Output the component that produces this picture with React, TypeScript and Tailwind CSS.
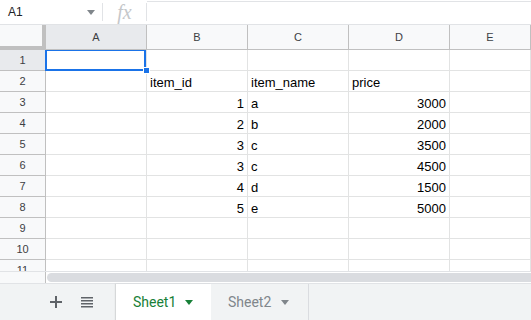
import * as React from 'react';

const COLS = ['A', 'B', 'C', 'D', 'E'];

type Cell = { v: string; num?: boolean };

const DATA: Record<number, Cell[]> = {
  2: [{ v: '' }, { v: 'item_id' }, { v: 'item_name' }, { v: 'price' }],
  3: [{ v: '' }, { v: '1', num: true }, { v: 'a' }, { v: '3000', num: true }],
  4: [{ v: '' }, { v: '2', num: true }, { v: 'b' }, { v: '2000', num: true }],
  5: [{ v: '' }, { v: '3', num: true }, { v: 'c' }, { v: '3500', num: true }],
  6: [{ v: '' }, { v: '3', num: true }, { v: 'c' }, { v: '4500', num: true }],
  7: [{ v: '' }, { v: '4', num: true }, { v: 'd' }, { v: '1500', num: true }],
  8: [{ v: '' }, { v: '5', num: true }, { v: 'e' }, { v: '5000', num: true }],
};

function Caret({ className }: { className: string }) {
  return (
    <svg width="8" height="5" viewBox="0 0 8 5" className={className}>
      <path d="M0 0h8L4 5z" fill="currentColor" />
    </svg>
  );
}

function FormulaBar() {
  return (
    <div className="flex h-[25px] items-stretch border-b border-[#e1e3e6] bg-white">
      <div className="flex w-[102px] items-center pl-[8px] pr-[7px]">
        <span className="flex-1 text-[12px] text-[#202124]">A1</span>
        <Caret className="text-[#80868b]" />
      </div>
      <div className="my-[3px] w-px bg-[#e1e3e6]" />
      <div className="flex w-[43px] items-center justify-center">
        <span className="font-['Liberation_Serif',serif] text-[20px] italic leading-none text-[#c5c7ca]">fx</span>
      </div>
      <div className="my-[3px] w-px bg-[#e1e3e6]" />
      <div className="mt-px flex-1 border-t border-[#e1e3e6]" />
    </div>
  );
}

function HeaderRow() {
  return (
    <div className="flex h-[25px]">
      <div className="w-[46px] shrink-0 border-b-4 border-r-4 border-[#c0c0c0] bg-[#f8f9fa]" />
      {COLS.map((c, i) => (
        <div
          key={c}
          className={`flex shrink-0 items-center justify-center border-b border-r border-[#c0c0c0] text-[11px] text-[#3c4043] ${
            i === 0 ? 'w-[101px] bg-[#e8eaed]' : i === 4 ? 'flex-1 bg-[#f8f9fa]' : 'w-[101px] bg-[#f8f9fa]'
          }`}
        >
          {c}
        </div>
      ))}
    </div>
  );
}

function Row({ n }: { n: number }) {
  const cells = DATA[n] ?? [];
  return (
    <div className="flex h-[21px] shrink-0">
      <div
        className={`flex w-[46px] shrink-0 items-center justify-center border-b border-r border-[#c0c0c0] text-[11px] text-[#3c4043] ${
          n === 1 ? 'bg-[#e8eaed]' : 'bg-[#f8f9fa]'
        }`}
      >
        {n}
      </div>
      {COLS.map((c, i) => {
        const cell = cells[i];
        const sel = n === 1 && i === 0;
        return (
          <div
            key={c}
            className={`relative flex shrink-0 items-end border-b border-r border-[#e2e3e3] px-[3px] pb-[1px] text-[13px] leading-[15px] text-black ${
              i === 4 ? 'flex-1' : 'w-[101px]'
            } ${cell?.num ? 'justify-end' : ''} ${sel ? 'z-10' : ''}`}
          >
            {cell?.v}
            {sel && (
              <>
                <div className="absolute left-[-1px] top-[-1px] h-[22px] w-[101px] border-2 border-[#1a73e8]" />
                <div className="absolute bottom-[-4px] right-[-4px] h-[7px] w-[7px] border border-white bg-[#1a73e8]" />
              </>
            )}
          </div>
        );
      })}
    </div>
  );
}

function Grid() {
  const rows = Array.from({ length: 11 }, (_, i) => i + 1);
  return (
    <div className="flex h-[221px] flex-col overflow-hidden">
      {rows.map((n) => (
        <Row key={n} n={n} />
      ))}
    </div>
  );
}

function Scrollbar() {
  return (
    <div className="flex h-[13px] border-y border-[#e1e3e6] bg-white">
      <div className="w-[46px] border-r border-[#c0c0c0] bg-[#f8f9fa]" />
      <div className="flex-1 py-px pl-px">
        <div className="h-full rounded-l-full bg-[#dadce0]" />
      </div>
    </div>
  );
}

function TabBar() {
  return (
    <div className="flex h-[36px] items-stretch bg-[#f1f3f4]">
      <div className="flex w-[116px] items-center pl-[50px]">
        <svg width="12" height="12" viewBox="0 0 12 12" className="text-[#5f6368]">
          <path d="M5 0h2v5h5v2H7v5H5V7H0V5h5z" fill="currentColor" />
        </svg>
        <svg width="12" height="12" viewBox="0 0 12 12" className="ml-[19px] text-[#5f6368]">
          <path d="M0 1h12v1.5H0zM0 4h12v1.5H0zM0 7h12v1.5H0zM0 10h12v1.5H0z" fill="currentColor" />
        </svg>
      </div>
      <div className="flex w-[95px] items-center bg-white pl-[17px] shadow-[-1px_0_1px_rgba(60,64,67,0.15)]">
        <span className="font-['Roboto',sans-serif] text-[14px] text-[#188038]">Sheet1</span>
        <Caret className="ml-[9px] text-[#188038]" />
      </div>
      <div className="flex w-[98px] items-center border-r border-[#dadce0] pl-[17px]">
        <span className="font-['Roboto',sans-serif] text-[14px] text-[#80868b]">Sheet2</span>
        <Caret className="ml-[10px] text-[#80868b]" />
      </div>
    </div>
  );
}

export default function App() {
  return (
    <div className="flex h-[320px] w-[531px] flex-col overflow-hidden bg-white font-['Liberation_Sans',Arial,sans-serif]">
      <FormulaBar />
      <HeaderRow />
      <Grid />
      <Scrollbar />
      <TabBar />
    </div>
  );
}
